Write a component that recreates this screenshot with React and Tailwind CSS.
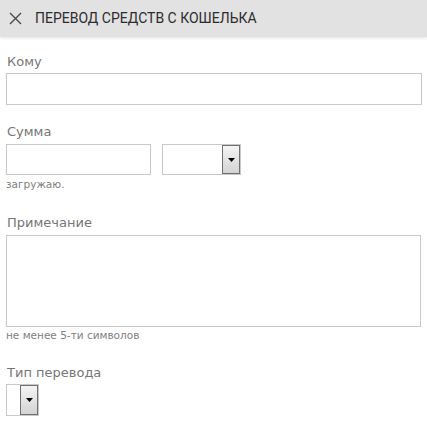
import React from "react";

function SelectBtn() {
  return (
    <div className="flex h-full w-[18px] items-center justify-center border border-[#707070] bg-gradient-to-b from-[#f4f4f4] to-[#d4d4d4]">
      <svg width="7" height="4" viewBox="0 0 7 4"><path d="M0 0H7L3.5 4Z" fill="#000" /></svg>
    </div>
  );
}

export default function App() {
  const label = "text-[13px] leading-[16px] text-[#767676]";
  const hint = "text-[10.5px] leading-[12px] text-[#808080]";
  return (
    <div className="min-h-[445px] w-[427px] bg-white" style={{ fontFamily: '"DejaVu Sans", Verdana, sans-serif' }}>
      <div className="flex h-[37px] items-center bg-[#e2e2e2] pl-[9px] shadow-[0_1px_3px_rgba(0,0,0,0.12)]" style={{ fontFamily: 'Roboto, "Noto Sans", sans-serif' }}>
        <svg width="13" height="13" viewBox="0 0 13 13" className="mr-[13px]">
          <path d="M1 1L12 12M12 1L1 12" stroke="#4a4a4a" strokeWidth="1.4" />
        </svg>
        <span className="text-[14px] uppercase text-[#2c2c2c]">Перевод средств с кошелька</span>
      </div>
      <div className="px-[6px]">
        <div className={`${label} mt-[17px] pl-[1px]`}>Кому</div>
        <div className="mt-[3px] h-[32px] w-[416px] border border-[#c8c8c8]" />

        <div className={`${label} mt-[19px] pl-[1px]`}>Сумма</div>
        <div className="mt-[4px] flex gap-[11px]">
          <div className="h-[31px] w-[145px] border border-[#c8c8c8]" />
          <div className="flex h-[31px] w-[79px] justify-end border border-[#c8c8c8]">
            <SelectBtn />
          </div>
        </div>
        <div className={`${hint} mt-[3px]`}>загружаю.</div>

        <div className={`${label} mt-[25px] pl-[1px]`}>Примечание</div>
        <div className="mt-[4px] h-[92px] w-[415px] border border-[#c8c8c8]" />
        <div className={`${hint} mt-[2px]`}>не менее 5-ти символов</div>

        <div className={`${label} mt-[24px] pl-[1px]`}>Тип перевода</div>
        <div className="mt-[3px] flex h-[32px] w-[33px] justify-end border border-[#c8c8c8]">
          <SelectBtn />
        </div>
      </div>
    </div>
  );
}
